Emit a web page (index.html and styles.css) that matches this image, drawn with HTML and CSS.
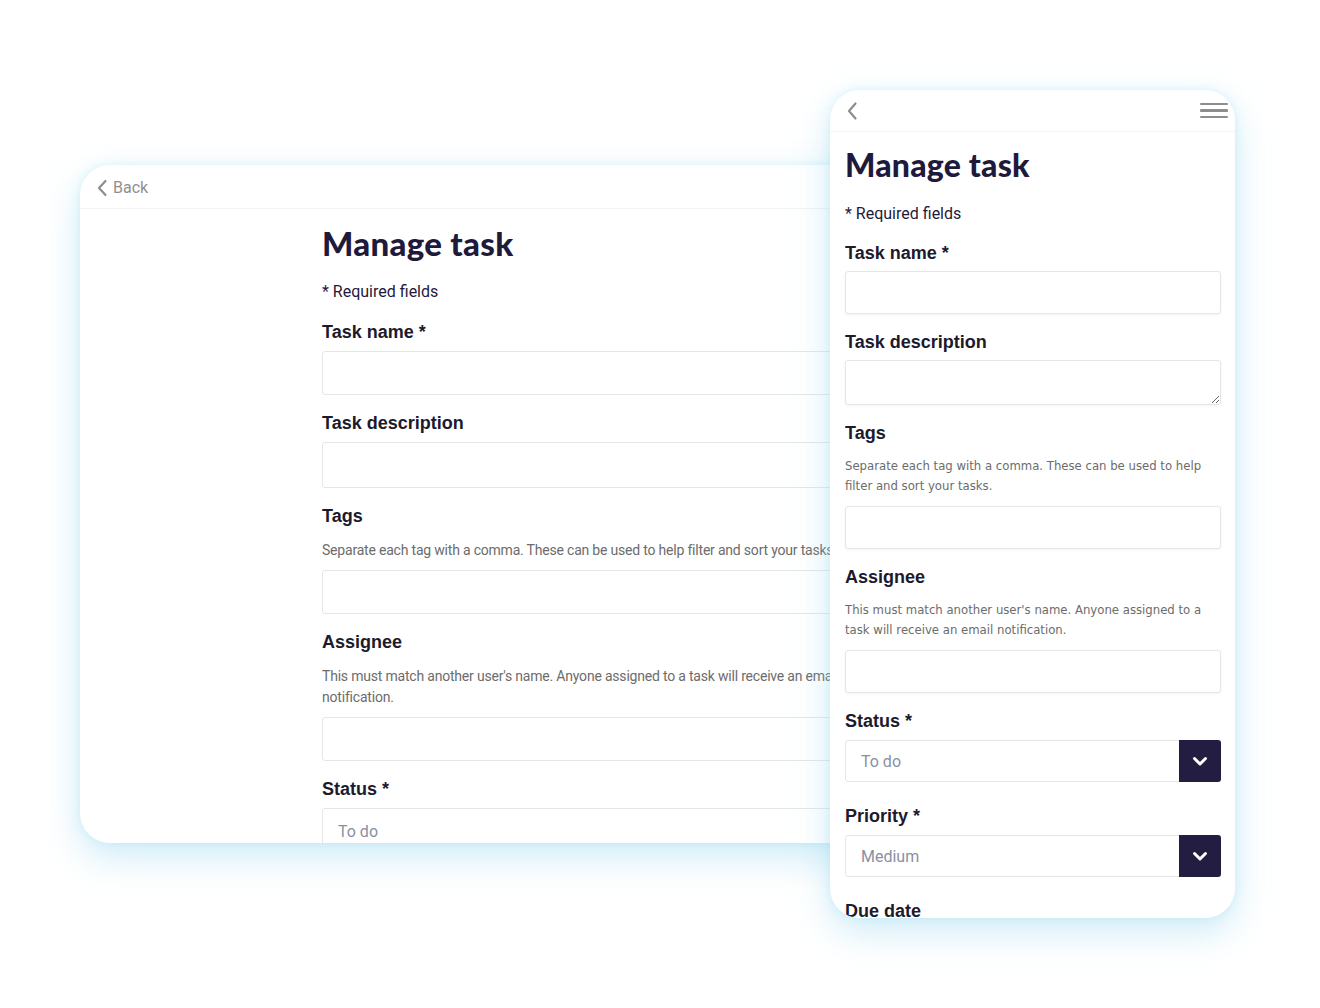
FILE: index.html
```html
<!DOCTYPE html>
<html lang="en">
<head>
  <meta charset="UTF-8">
  <meta name="viewport" content="width=device-width, initial-scale=1.0">
  <title>Manage task</title>
  <link rel="stylesheet" href="styles.css">
</head>
<body>
  <div class="stage">

    <!-- wide layout -->
    <div class="screen desktop">
      <div class="bar">
        <a class="back" href="#">
          <svg class="chev" width="12" height="18" viewBox="0 0 12 18"><path d="M9.5 2 L3 9 L9.5 16" fill="none" stroke="#8d8d8d" stroke-width="2.2" stroke-linecap="round" stroke-linejoin="round"/></svg>
          <span>Back</span>
        </a>
      </div>
      <form class="task-form">
        <h1>Manage task</h1>
        <p class="required">* Required fields</p>

        <label class="label">Task name *</label>
        <input class="field" type="text">

        <label class="label">Task description</label>
        <textarea class="field area"></textarea>

        <label class="label">Tags</label>
        <p class="help">Separate each tag with a comma. These can be used to help filter and sort your tasks.</p>
        <input class="field" type="text">

        <label class="label">Assignee</label>
        <p class="help">This must match another user's name. Anyone assigned to a task will receive an email notification.</p>
        <input class="field" type="text">

        <label class="label">Status *</label>
        <div class="select">
          <span class="value">To do</span>
          <span class="caret"></span>
        </div>
      </form>
    </div>

    <!-- narrow layout -->
    <div class="screen mobile">
      <div class="bar">
        <svg class="chev" width="12" height="20" viewBox="0 0 12 20"><path d="M9.5 2.5 L3 10 L9.5 17.5" fill="none" stroke="#8d8d8d" stroke-width="2.2" stroke-linecap="round" stroke-linejoin="round"/></svg>
        <span class="burger"><i></i><i></i><i></i></span>
      </div>
      <form class="task-form">
        <h1>Manage task</h1>
        <p class="required">* Required fields</p>

        <label class="label">Task name *</label>
        <input class="field" type="text">

        <label class="label">Task description</label>
        <textarea class="field area"></textarea>

        <label class="label">Tags</label>
        <p class="help">Separate each tag with a comma. These can be used to help filter and sort your tasks.</p>
        <input class="field" type="text">

        <label class="label">Assignee</label>
        <p class="help">This must match another user's name. Anyone assigned to a task will receive an email notification.</p>
        <input class="field" type="text">

        <label class="label">Status *</label>
        <div class="select">
          <span class="value">To do</span>
          <span class="caret">
            <svg width="16" height="12" viewBox="0 0 16 12"><path d="M2.5 3.5 L8 9 L13.5 3.5" fill="none" stroke="#fff" stroke-width="3" stroke-linecap="round" stroke-linejoin="round"/></svg>
          </span>
        </div>

        <label class="label">Priority *</label>
        <div class="select">
          <span class="value">Medium</span>
          <span class="caret">
            <svg width="16" height="12" viewBox="0 0 16 12"><path d="M2.5 3.5 L8 9 L13.5 3.5" fill="none" stroke="#fff" stroke-width="3" stroke-linecap="round" stroke-linejoin="round"/></svg>
          </span>
        </div>

        <label class="label">Due date</label>
      </form>
    </div>

  </div>
</body>
</html>
```

FILE: styles.css
```css
html, body {
  margin: 0;
  padding: 0;
  background: #fff;
}
.stage {
  position: relative;
  width: 1320px;
  height: 1008px;
  overflow: hidden;
}

/* the two device frames */
.screen {
  position: absolute;
  background: #fff;
  border-radius: 30px;
  overflow: hidden;
  box-shadow: 0 14px 36px rgba(140, 210, 235, 0.42), 0 0 10px rgba(160, 225, 245, 0.35);
}
.desktop {
  left: 80px;
  top: 165px;
  width: 1040px;
  height: 678px;
}
.mobile {
  left: 830px;
  top: 90px;
  width: 405px;
  height: 828px;
}

.bar {
  display: flex;
  align-items: center;
  border-bottom: 1px solid #f1f3f4;
  box-sizing: border-box;
}
.desktop .bar {
  height: 44px;
  padding: 2px 0 0 16px;
}
.mobile .bar {
  height: 42px;
  padding: 0 7px 0 16px;
  justify-content: space-between;
}
.back {
  display: flex;
  align-items: center;
  gap: 5px;
  color: #8f8f8f;
  text-decoration: none;
  font-family: Roboto, "Liberation Sans", sans-serif;
  font-size: 16px;
}
.burger {
  display: flex;
  flex-direction: column;
  gap: 4px;
}
.burger i {
  display: block;
  width: 28px;
  height: 2.5px;
  background: #8d8d8d;
  border-radius: 1px;
}

/* form */
.task-form {
  display: flex;
  flex-direction: column;
  align-items: flex-start;
}
.desktop .task-form {
  padding: 15px 0 0 242px;
  width: 720px;
}
.mobile .task-form {
  padding: 14px 14px 0 15px;
}
.task-form h1 {
  margin: 0;
  font-family: Lato, sans-serif;
  font-weight: 900;
  font-size: 33px;
  line-height: 38px;
  color: #1f1a3c;
  letter-spacing: 0.3px;
}
.mobile h1 {
  font-size: 32px;
  letter-spacing: 0.2px;
}
.required {
  margin: 20px 0 19px 0;
  font-family: Roboto, "Liberation Sans", sans-serif;
  font-size: 16px;
  line-height: 20px;
  color: #1f1a3c;
}
.mobile .required {
  margin-bottom: 18px;
}
.label {
  display: block;
  font-family: "Liberation Sans", Arial, sans-serif;
  font-weight: 700;
  font-size: 18px;
  line-height: 22px;
  color: #1c1a2c;
  margin: 0 0 8px 0;
}
.mobile .label {
  margin-bottom: 7px;
}
.field {
  display: block;
  width: 100%;
  height: 44px;
  box-sizing: border-box;
  border: 1px solid #e5e6e8;
  border-radius: 3px;
  background: #fff;
  margin: 0 0 17px 0;
  font: inherit;
}
.mobile .field {
  height: 43px;
  box-shadow: 0 1px 3px rgba(0, 0, 0, 0.05);
}
.field.area {
  height: 46px;
  resize: vertical;
}
.mobile .field.area {
  height: 45px;
}
.help {
  margin: 5px 0 9px 0;
  color: #6c6c6c;
}
.desktop .help {
  font-family: Roboto, "Liberation Sans", sans-serif;
  font-size: 14px;
  line-height: 21px;
  letter-spacing: -0.2px;
  width: 560px;
}
.mobile .help {
  font-family: "DejaVu Sans", Verdana, sans-serif;
  font-size: 11.7px;
  line-height: 20px;
  margin: 5px 0 10px 0;
}

/* selects */
.select {
  display: flex;
  width: 100%;
  height: 42px;
  box-sizing: border-box;
  border: 1px solid #e5e6e8;
  border-radius: 3px;
  margin-bottom: 23px;
}
.select .value {
  flex: 1;
  display: flex;
  align-items: center;
  padding-left: 15px;
  font-family: Roboto, "Liberation Sans", sans-serif;
  font-size: 16px;
  color: #8a90a2;
}
.select .caret {
  width: 42px;
  margin: -1px -1px -1px 0;
  background: #241d42;
  border-radius: 0 3px 3px 0;
  display: flex;
  align-items: center;
  justify-content: center;
}
.mobile .select {
  margin-top: 1px;
}
.desktop .select {
  height: 46px;
}
```
